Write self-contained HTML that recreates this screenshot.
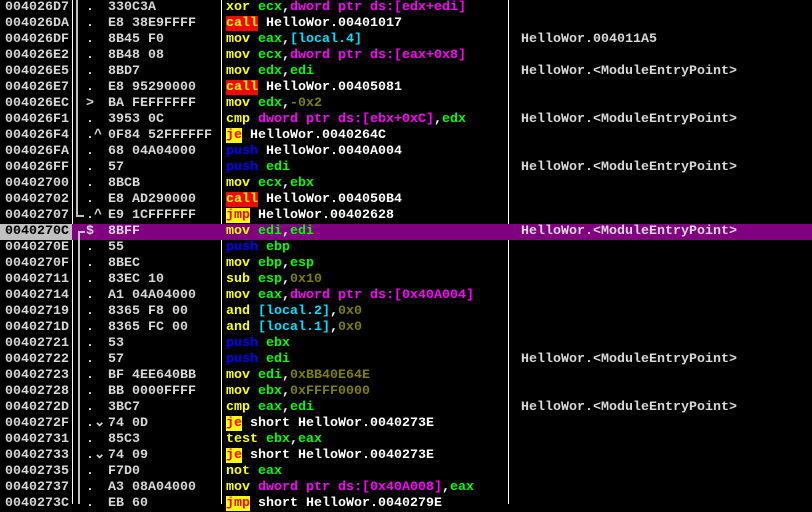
<!DOCTYPE html>
<html><head><meta charset="utf-8"><style>
body{margin:0;width:812px;height:504px;background:#000;overflow:hidden;position:relative;font-family:"Liberation Mono",monospace;font-size:13.33px;font-weight:bold}
.r{position:absolute;left:0;width:812px;height:16px;line-height:16px;white-space:pre}
.a{position:absolute;left:5px;color:#d8d8d8}
.d{position:absolute;left:86px;color:#d8d8d8}
.b{position:absolute;left:108px;color:#d8d8d8}
.i{position:absolute;left:226px;color:#fff}
.c{position:absolute;left:521px;color:#d8d8d8}
.y{color:#ffff00}.g{color:#00ff00}.m{color:#ff00ff}.o{color:#808000}.cy{color:#00e0ff}.bl{color:#0000ff}.w{color:#fff}
.call{background:#ff0000;color:#ffff00}
.j{background:#ffff00;color:#ff0000}
.sel{background:#800080;left:72px;width:740px;position:absolute;top:0;height:16px}
.vl{position:absolute;top:0;height:504px;width:1px;background:#fff}
</style></head><body>
<div class="vl" style="left:72px"></div>
<div class="vl" style="left:221px"></div>
<div class="vl" style="left:508px"></div>
<div style="position:absolute;left:76px;top:0;width:2px;height:217px;background:#c0c0c0"></div>
<div style="position:absolute;left:76px;top:215px;width:8px;height:2px;background:#c0c0c0"></div>
<div id="rows"></div>
<div class="r" style="top:0"><span class="a">004026D7</span><span class="d">.</span><span class="b">330C3A</span><span class="i"><span class="y">xor</span> <span class="g">ecx</span>,<span class="m">dword ptr ds:[edx+edi]</span></span></div>
<div class="r" style="top:16px"><span class="a">004026DA</span><span class="d">.</span><span class="b">E8 38E9FFFF</span><span class="i"><span class="call">call</span> HelloWor.00401017</span></div>
<div class="r" style="top:32px"><span class="a">004026DF</span><span class="d">.</span><span class="b">8B45 F0</span><span class="i"><span class="y">mov</span> <span class="g">eax</span>,<span class="cy">[local.4]</span></span><span class="c">HelloWor.004011A5</span></div>
<div class="r" style="top:48px"><span class="a">004026E2</span><span class="d">.</span><span class="b">8B48 08</span><span class="i"><span class="y">mov</span> <span class="g">ecx</span>,<span class="m">dword ptr ds:[eax+0x8]</span></span></div>
<div class="r" style="top:64px"><span class="a">004026E5</span><span class="d">.</span><span class="b">8BD7</span><span class="i"><span class="y">mov</span> <span class="g">edx</span>,<span class="g">edi</span></span><span class="c">HelloWor.&lt;ModuleEntryPoint&gt;</span></div>
<div class="r" style="top:80px"><span class="a">004026E7</span><span class="d">.</span><span class="b">E8 95290000</span><span class="i"><span class="call">call</span> HelloWor.00405081</span></div>
<div class="r" style="top:96px"><span class="a">004026EC</span><span class="d">&gt;</span><span class="b">BA FEFFFFFF</span><span class="i"><span class="y">mov</span> <span class="g">edx</span>,<span class="o">-0x2</span></span></div>
<div class="r" style="top:112px"><span class="a">004026F1</span><span class="d">.</span><span class="b">3953 0C</span><span class="i"><span class="y">cmp</span> <span class="m">dword ptr ds:[ebx+0xC]</span>,<span class="g">edx</span></span><span class="c">HelloWor.&lt;ModuleEntryPoint&gt;</span></div>
<div class="r" style="top:128px"><span class="a">004026F4</span><span class="d">.^</span><span class="b">0F84 52FFFFFF</span><span class="i"><span class="j">je</span> HelloWor.0040264C</span></div>
<div class="r" style="top:144px"><span class="a">004026FA</span><span class="d">.</span><span class="b">68 04A04000</span><span class="i"><span class="bl">push</span> HelloWor.0040A004</span></div>
<div class="r" style="top:160px"><span class="a">004026FF</span><span class="d">.</span><span class="b">57</span><span class="i"><span class="bl">push</span> <span class="g">edi</span></span><span class="c">HelloWor.&lt;ModuleEntryPoint&gt;</span></div>
<div class="r" style="top:176px"><span class="a">00402700</span><span class="d">.</span><span class="b">8BCB</span><span class="i"><span class="y">mov</span> <span class="g">ecx</span>,<span class="g">ebx</span></span></div>
<div class="r" style="top:192px"><span class="a">00402702</span><span class="d">.</span><span class="b">E8 AD290000</span><span class="i"><span class="call">call</span> HelloWor.004050B4</span></div>
<div class="r" style="top:208px"><span class="a">00402707</span><span class="d">.^</span><span class="b">E9 1CFFFFFF</span><span class="i"><span class="j">jmp</span> HelloWor.00402628</span></div>
<div class="r" style="top:224px"><div class="sel"></div><span class="a" style="background:#c0c0c0;color:#000;left:0;padding-left:5px;width:67px">0040270C</span><span class="d">$</span><span class="b">8BFF</span><span class="i"><span class="y">mov</span> <span class="g">edi</span>,<span class="g">edi</span></span><span class="c">HelloWor.&lt;ModuleEntryPoint&gt;</span></div>
<div style="position:absolute;left:78px;top:231px;width:2px;height:273px;background:#c0c0c0"></div>
<div style="position:absolute;left:78px;top:231px;width:7px;height:2px;background:#c0c0c0"></div>
<div class="r" style="top:240px"><span class="a">0040270E</span><span class="d">.</span><span class="b">55</span><span class="i"><span class="bl">push</span> <span class="g">ebp</span></span></div>
<div class="r" style="top:256px"><span class="a">0040270F</span><span class="d">.</span><span class="b">8BEC</span><span class="i"><span class="y">mov</span> <span class="g">ebp</span>,<span class="g">esp</span></span></div>
<div class="r" style="top:272px"><span class="a">00402711</span><span class="d">.</span><span class="b">83EC 10</span><span class="i"><span class="y">sub</span> <span class="g">esp</span>,<span class="o">0x10</span></span></div>
<div class="r" style="top:288px"><span class="a">00402714</span><span class="d">.</span><span class="b">A1 04A04000</span><span class="i"><span class="y">mov</span> <span class="g">eax</span>,<span class="m">dword ptr ds:[0x40A004]</span></span></div>
<div class="r" style="top:304px"><span class="a">00402719</span><span class="d">.</span><span class="b">8365 F8 00</span><span class="i"><span class="y">and</span> <span class="cy">[local.2]</span>,<span class="o">0x0</span></span></div>
<div class="r" style="top:320px"><span class="a">0040271D</span><span class="d">.</span><span class="b">8365 FC 00</span><span class="i"><span class="y">and</span> <span class="cy">[local.1]</span>,<span class="o">0x0</span></span></div>
<div class="r" style="top:336px"><span class="a">00402721</span><span class="d">.</span><span class="b">53</span><span class="i"><span class="bl">push</span> <span class="g">ebx</span></span></div>
<div class="r" style="top:352px"><span class="a">00402722</span><span class="d">.</span><span class="b">57</span><span class="i"><span class="bl">push</span> <span class="g">edi</span></span><span class="c">HelloWor.&lt;ModuleEntryPoint&gt;</span></div>
<div class="r" style="top:368px"><span class="a">00402723</span><span class="d">.</span><span class="b">BF 4EE640BB</span><span class="i"><span class="y">mov</span> <span class="g">edi</span>,<span class="o">0xBB40E64E</span></span></div>
<div class="r" style="top:384px"><span class="a">00402728</span><span class="d">.</span><span class="b">BB 0000FFFF</span><span class="i"><span class="y">mov</span> <span class="g">ebx</span>,<span class="o">0xFFFF0000</span></span></div>
<div class="r" style="top:400px"><span class="a">0040272D</span><span class="d">.</span><span class="b">3BC7</span><span class="i"><span class="y">cmp</span> <span class="g">eax</span>,<span class="g">edi</span></span><span class="c">HelloWor.&lt;ModuleEntryPoint&gt;</span></div>
<div class="r" style="top:416px"><span class="a">0040272F</span><span class="d">.&#8964;</span><span class="b">74 0D</span><span class="i"><span class="j">je</span> short HelloWor.0040273E</span></div>
<div class="r" style="top:432px"><span class="a">00402731</span><span class="d">.</span><span class="b">85C3</span><span class="i"><span class="y">test</span> <span class="g">ebx</span>,<span class="g">eax</span></span></div>
<div class="r" style="top:448px"><span class="a">00402733</span><span class="d">.&#8964;</span><span class="b">74 09</span><span class="i"><span class="j">je</span> short HelloWor.0040273E</span></div>
<div class="r" style="top:464px"><span class="a">00402735</span><span class="d">.</span><span class="b">F7D0</span><span class="i"><span class="y">not</span> <span class="g">eax</span></span></div>
<div class="r" style="top:480px"><span class="a">00402737</span><span class="d">.</span><span class="b">A3 08A04000</span><span class="i"><span class="y">mov</span> <span class="m">dword ptr ds:[0x40A008]</span>,<span class="g">eax</span></span></div>
<div class="r" style="top:496px"><span class="a">0040273C</span><span class="d">.</span><span class="b">EB 60</span><span class="i"><span class="j">jmp</span> short HelloWor.0040279E</span></div>
</body></html>
